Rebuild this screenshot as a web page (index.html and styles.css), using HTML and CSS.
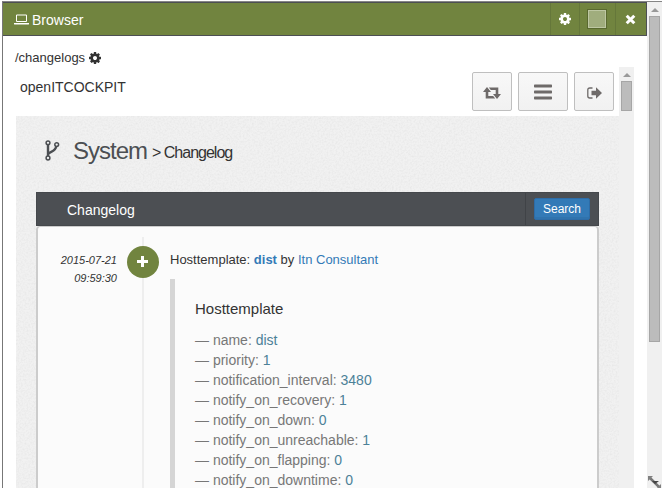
FILE: index.html
```html
<!DOCTYPE html>
<html lang="en">
<head>
<meta charset="utf-8">
<title>openITCOCKPIT</title>
<link rel="stylesheet" href="styles.css">
</head>
<body>
<div class="viewport">
  <section class="widget">
    <header class="titlebar">
      <svg class="laptop" width="15" height="11" viewBox="0 0 15 11"><path d="M2.5 1h10v6.500h-10z" fill="none" stroke="#fff"/><path d="M0 9h15v1q0 .5-1 .5H1q-1 0-1-.5z" fill="#fff"/></svg>
      <h2 class="titlebar-text">Browser</h2>
      <div class="tool tool-gear"><svg width="12" height="12" viewBox="0 0 1536 1536"><path fill="#fff" d="M1024 768q0-106-75-181t-181-75-181 75-75 181 75 181 181 75 181-75 75-181zm512-109v222q0 12-8 23t-20 13l-185 28q-19 54-39 91 35 50 107 138 10 12 10 25t-9 23q-27 37-99 108t-94 71q-12 0-26-9l-138-108q-44 23-91 38-16 136-29 186-7 28-36 28H657q-14 0-24.500-8.500T621 1506l-28-184q-49-16-90-37l-141 107q-10 9-25 9-14 0-25-11-126-114-165-168-7-10-7-23 0-12 8-23 15-21 51-66.500t54-70.500q-27-50-41-99L29 913q-13-2-21-12.500T0 877V655q0-12 8-23t19-13l186-28q14-46 39-92-40-57-107-138-10-12-10-24 0-10 9-23 26-36 98.500-107.500T337 135q13 0 26 10l138 107q44-23 91-38 16-136 29-186 7-28 36-28h222q14 0 24.500 8.500T915 30l28 184q49 16 90 37l142-107q9-9 24-9 13 0 25 10 129 119 165 170 7 8 7 22 0 12-8 23-15 21-51 66.500t-54 70.500q26 50 41 98l183 28q13 2 21 12.500t8 23.500z"/></svg></div>
      <div class="tool tool-color"><span class="swatch"></span></div>
      <div class="tool tool-close"><svg width="11" height="11" viewBox="0 0 11 11"><path d="M1.700 1.700l7.600 7.600M9.300 1.700l-7.600 7.600" stroke="#fff" stroke-width="3"/></svg></div>
    </header>
    <div class="widget-body">
      <p class="path">/changelogs <svg width="12" height="12" viewBox="0 0 1536 1536"><path fill="#333" d="M1024 768q0-106-75-181t-181-75-181 75-75 181 75 181 181 75 181-75 75-181zm512-109v222q0 12-8 23t-20 13l-185 28q-19 54-39 91 35 50 107 138 10 12 10 25t-9 23q-27 37-99 108t-94 71q-12 0-26-9l-138-108q-44 23-91 38-16 136-29 186-7 28-36 28H657q-14 0-24.500-8.500T621 1506l-28-184q-49-16-90-37l-141 107q-10 9-25 9-14 0-25-11-126-114-165-168-7-10-7-23 0-12 8-23 15-21 51-66.500t54-70.500q-27-50-41-99L29 913q-13-2-21-12.500T0 877V655q0-12 8-23t19-13l186-28q14-46 39-92-40-57-107-138-10-12-10-24 0-10 9-23 26-36 98.500-107.500T337 135q13 0 26 10l138 107q44-23 91-38 16-136 29-186 7-28 36-28h222q14 0 24.500 8.500T915 30l28 184q49 16 90 37l142-107q9-9 24-9 13 0 25 10 129 119 165 170 7 8 7 22 0 12-8 23-15 21-51 66.500t-54 70.500q26 50 41 98l183 28q13 2 21 12.500t8 23.500z"/></svg></p>
      <div class="frame">
        <div class="page">
          <div class="topbar">
            <span class="brand">openITCOCKPIT</span>
            <div class="btn"><svg width="18" height="12" viewBox="0 0 18 12"><g fill="#6e6a69"><path d="M4 0L8 5H5.300V9h4.900l2 2.600H2.700V5H0z"/><path d="M14 12l-4-5h2.700V3H7.800l-2-2.600h9.500V7H18z"/></g></svg></div>
            <div class="btn btn-wide"><svg width="18" height="16" viewBox="0 0 18 16"><g fill="#6e6a69"><rect y=".5" width="18" height="3" rx=".7"/><rect y="6.500" width="18" height="3" rx=".7"/><rect y="12.500" width="18" height="3" rx=".7"/></g></svg></div>
            <div class="btn"><svg width="15" height="12" viewBox="0 0 15 12"><path d="M5.500 1H2.800Q.8 1 .8 3v6q0 2 2 2h2.700" fill="none" stroke="#6e6a69" stroke-width="1.300"/><path d="M4.500 3.800H9V.3L15 6l-6 5.700V8.200H4.500z" fill="#6e6a69"/></svg></div>
          </div>
          <main class="content">
            <svg class="grain" aria-hidden="true"><filter id="grain" color-interpolation-filters="sRGB"><feTurbulence type="fractalNoise" baseFrequency=".55" numOctaves="2"/><feColorMatrix values="0 0 0 0 .5  0 0 0 0 .5  0 0 0 0 .5  .16 0 0 0 -.06"/></filter><rect width="100%" height="100%" filter="url(#grain)"/></svg>
            <h1 class="heading">
              <svg class="fork" width="15" height="21" viewBox="0 0 15 21"><g fill="none" stroke="#4c4f53"><path d="M3 4v13M3 14.500c1-3.500 8-2 8.300-9" stroke-width="2.400"/><g fill="#f0f1f1" stroke-width="1.500"><circle cx="3" cy="2.800" r="1.900"/><circle cx="3" cy="18" r="1.900"/><circle cx="11.700" cy="4.600" r="1.900"/></g></g></svg>
              <span class="heading-main">System</span><span class="heading-sub">&gt; Changelog</span>
            </h1>
            <section class="panel">
              <header class="panel-head">
                <h2>Changelog</h2>
                <div class="panel-tools"><button class="search">Search</button></div>
              </header>
              <div class="panel-body">
                <div class="entry">
                  <time class="date">2015-07-21<br>09:59:30</time>
                  <div class="rail"><span class="dot"><svg width="11" height="11" viewBox="0 0 11 11"><path d="M5.500 0v11M0 5.500h11" stroke="#fff" stroke-width="3"/></svg></span></div>
                  <div class="detail">
                    <p class="summary">Hosttemplate: <a><b>dist</b></a> by <a>Itn Consultant</a></p>
                    <blockquote class="changes">
                      <h3>Hosttemplate</h3>
                      <div class="row">— name: <span>dist</span></div>
                      <div class="row">— priority: <span>1</span></div>
                      <div class="row">— notification_interval: <span>3480</span></div>
                      <div class="row">— notify_on_recovery: <span>1</span></div>
                      <div class="row">— notify_on_down: <span>0</span></div>
                      <div class="row">— notify_on_unreachable: <span>1</span></div>
                      <div class="row">— notify_on_flapping: <span>0</span></div>
                      <div class="row">— notify_on_downtime: <span>0</span></div>
                    </blockquote>
                  </div>
                </div>
              </div>
            </section>
          </main>
        </div>
        <div class="scroll scroll-inner"><i class="arrow"></i><i class="thumb"></i></div>
      </div>
    </div>
  </section>
  <div class="scroll scroll-outer"><i class="arrow"></i><i class="thumb"></i></div>
  <svg class="resize" width="13" height="13" viewBox="0 0 13 13"><path d="M2 2l10 10" stroke="#777" stroke-width="2.500"/><path d="M0 0h5L0 5zM13 13V8l-5 5z" fill="#808080"/><path d="M4 5h7L7 8z" fill="#444"/></svg>
</div>
</body>
</html>
```
FILE: styles.css
```css
* { box-sizing: border-box; }
body {
  margin: 0;
  height: 488px;
  overflow: hidden;
  background: #fff;
  color: #333;
  font-family: "Liberation Sans", Arial, sans-serif;
  font-size: 13px;
}
h1, h2, h3, p, blockquote { margin: 0; font-weight: 400; }
svg { flex: none; }
.viewport {
  position: relative;
  display: flex;
  height: 487px;
  margin: 1px 0 0 2px;
  border-top: 1px solid #858585;
  border-left: 1px solid #777;
}
.widget { width: 644px; display: flex; flex-direction: column; }
.titlebar {
  display: flex;
  align-items: center;
  height: 34px;
  flex: none;
  background: #71843f;
  border: 1px solid #4c4f53;
  border-left-width: 0;
  color: #fff;
}
.laptop { margin: 1px 3px 0 11px; }
.titlebar-text { flex: 1; font-size: 14px; padding-top: 2px; }
.tool {
  display: flex;
  align-items: center;
  justify-content: center;
  height: 32px;
  border-left: 1px solid #65773a;
}
.tool-gear { width: 29px; padding-right: 1px; }
.tool-color { width: 36px; padding-right: 1px; }
.tool-close { width: 31px; padding-right: 1px; }
.swatch { width: 20px; height: 20px; background: #a0ad7d; border: 1px solid #59692f; box-shadow: inset 0 0 0 1px #bdc7a2; }
.widget-body { flex: 1; min-height: 0; display: flex; flex-direction: column; padding: 13px 12px 0 13px; }
.path { height: 18px; line-height: 17px; flex: none; margin-left: -1px; }
.path svg { vertical-align: -2px; }
.frame { flex: 1; min-height: 0; display: flex; overflow: hidden; }
.page { width: 603px; display: flex; flex-direction: column; }
.topbar { display: flex; flex: none; gap: 6px; height: 49px; padding: 5px 5px 0 4px; }
.brand { flex: 1; font-size: 14px; line-height: 16px; padding-top: 7px; }
.btn {
  display: flex;
  align-items: center;
  justify-content: center;
  width: 40px;
  height: 39px;
  padding-top: 2px;
  border: 1px solid #bfbfbf;
  border-radius: 2px;
  background: linear-gradient(#f8f8f8, #f1f1f1);
}
.btn-wide { width: 50px; padding-top: 0; }
.content { position: relative; flex: 1; min-height: 0; padding: 20px 20px 0; background: #f1f1f1; }
.grain { position: absolute; inset: 0; width: 100%; height: 100%; }
.heading { position: relative; display: flex; height: 56px; padding-left: 9px; line-height: 30px; letter-spacing: -1px; white-space: nowrap; }
.fork { margin: 4px 13px 0 0; }
.heading-main { font-size: 24px; color: #4c4f53; width: 79px; }
.heading-sub { font-size: 16px; line-height: 33px; }
.panel { position: relative; height: 320px; }
.panel-head { display: flex; align-items: center; height: 34px; padding-left: 31px; background: #4c4f53; color: #fff; border: 1px solid #45484c; }
.panel-head h2 { flex: 1; font-size: 14px; padding: 1px 0 0 0; margin-left: -1px; }
.panel-tools { display: flex; align-items: center; width: 73px; height: 32px; padding-left: 8px; border-left: 1px solid #404347; }
.search {
  width: 56px;
  height: 22px;
  padding: 0;
  border: 1px solid #2d6ca7;
  border-radius: 2px;
  background: #337ab7;
  box-shadow: inset 0 -2px 0 rgba(0, 0, 0, .05);
  color: #fff;
  font: 12px "Liberation Sans", Arial, sans-serif;
}
.panel-body { height: 286px; padding: 10px 0 0; background: #fbfbfb; border: 1px solid #ccc; border-width: 1px 2px; border-radius: 4px 4px 0 0; }
.entry { display: flex; height: 275px; }
.date { width: 79px; padding-top: 14px; text-align: right; font-size: 11px; font-style: italic; line-height: 18px; }
.rail {
  width: 32px;
  height: 275px;
  margin-left: 10px;
  padding-top: 9px;
  background: linear-gradient(#eee, #eee) 15px 0 / 2px 100% no-repeat;
}
.dot { display: flex; align-items: center; justify-content: center; width: 32px; height: 32px; border-radius: 50%; background: #71843f; }
.dot svg { margin: -1px 1px 0 0; }
.detail { margin-left: 11px; padding-top: 14px; }
.summary { line-height: 18px; height: 28px; }
a { color: #337ab7; }
.changes { height: 240px; padding: 20px 0 0 20px; border-left: 5px solid #d5d5d5; font-size: 14px; line-height: 20px; }
.changes h3 { font-size: 15px; line-height: 20px; margin-bottom: 11px; }
.row { color: #777; }
.row span { color: #4c8198; }
.scroll { display: flex; flex-direction: column; align-items: center; width: 15px; background: #f0f0f0; }
.arrow { margin: 6px 0 4px; border: 4px solid transparent; border-top: 0; border-bottom-color: #999; }
.thumb { width: 11px; height: 326px; background: #bcbcbc; border: 1px solid #a6a6a6; }
.scroll-inner .thumb { height: 30px; }
.scroll-outer { height: 486px; }
.resize { position: absolute; right: 1px; bottom: -1px; }
```
